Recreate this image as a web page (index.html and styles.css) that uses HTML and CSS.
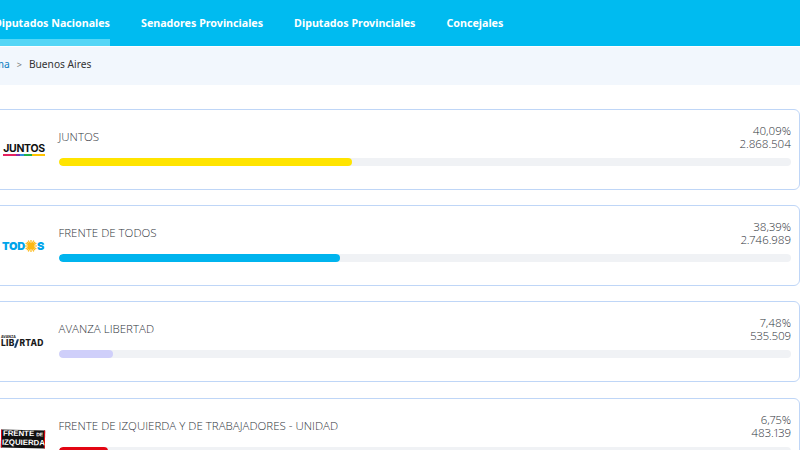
FILE: index.html
```html
<!DOCTYPE html>
<html lang="es">
<head>
<meta charset="utf-8">
<title>Resultados</title>
<link rel="stylesheet" href="styles.css">
</head>
<body>
<div class="page">
  <nav class="tabs">
    <a class="tab active">Diputados Nacionales</a>
    <a class="tab">Senadores Provinciales</a>
    <a class="tab">Diputados Provinciales</a>
    <a class="tab">Concejales</a>
  </nav>
  <div class="crumbs"><span class="link">Sistema</span><span class="sep">&gt;</span><span>Buenos Aires</span></div>
  <main class="list">
    <section class="card">
      <div class="logo"><div class="juntos">JUNTOS<div class="rainbow"></div></div></div>
      <div class="body">
        <div class="head"><div class="name">JUNTOS</div><div class="nums">40,09%<br>2.868.504</div></div>
        <div class="track"><div class="fill yellow" style="width:40.09%"></div></div>
      </div>
    </section>
    <section class="card">
      <div class="logo"><div class="todos">TOD<svg class="sun" viewBox="0 0 20 20"><g stroke="#fdb813" stroke-width="2"><path d="M10 0v20M0 10h20M3 3l14 14M17 3L3 17M5.500 1l9 18M14.500 1l-9 18M1 5.500l18 9M19 5.500l-18 9"/></g><circle cx="10" cy="10" r="5.500" fill="#fdb813"/></svg>S</div></div>
      <div class="body">
        <div class="head"><div class="name">FRENTE DE TODOS</div><div class="nums">38,39%<br>2.746.989</div></div>
        <div class="track"><div class="fill blue" style="width:38.39%"></div></div>
      </div>
    </section>
    <section class="card">
      <div class="logo"><div class="avanza"><div class="avanza-top">AVANZA</div><div class="avanza-main">LIB<svg class="slash" viewBox="0 0 6 10"><path d="M3.500 0H6L2.500 10H0z" fill="#123a6b"/></svg>RTAD</div></div></div>
      <div class="body">
        <div class="head"><div class="name">AVANZA LIBERTAD</div><div class="nums">7,48%<br>535.509</div></div>
        <div class="track"><div class="fill lilac" style="width:7.48%"></div></div>
      </div>
    </section>
    <section class="card">
      <div class="logo"><div class="fit"><div>FRENTE <span class="de">DE</span></div><div>IZQUIERDA</div></div></div>
      <div class="body">
        <div class="head"><div class="name">FRENTE DE IZQUIERDA Y DE TRABAJADORES - UNIDAD</div><div class="nums">6,75%<br>483.139</div></div>
        <div class="track"><div class="fill red" style="width:6.75%"></div></div>
      </div>
    </section>
  </main>
</div>
</body>
</html>
```
FILE: styles.css
```css
html, body { margin: 0; padding: 0; background: #fff; }
body { width: 800px; height: 450px; overflow: hidden; font-family: "Open Sans", "Liberation Sans", sans-serif; }
.page { margin-left: -20px; width: 820px; }
.tabs { display: flex; height: 46px; background: #00bbf0; gap: 31px; padding-left: 14px; }
.tab { display: flex; align-items: center; height: 46px; box-sizing: border-box; color: #fff; font-family: "Noto Sans", sans-serif; font-size: 10.700px; font-weight: 700; white-space: nowrap; }
.tab.active { margin-left: -14px; width: 130px; justify-content: flex-end; border-bottom: 7px solid #55d6f6; padding-top: 7px; }
.crumbs { display: flex; align-items: center; gap: 7px; height: 38px; box-sizing: border-box; padding-bottom: 4px; margin-top: 1px; background: #f2f7fd; font-family: "Noto Sans", sans-serif; font-size: 10.200px; color: #333; }
.crumbs .link { color: #0a7cc0; margin-left: -8px; }
.crumbs .sep { color: #777; font-size: 9px; }
.list { display: flex; flex-direction: column; gap: 15.200px; padding-top: 24px; }
.card { flex: none; display: flex; box-sizing: border-box; height: 81px; width: 820px; border: 1px solid #bfd6f7; border-radius: 6px; background: #fff; }
.logo { flex: none; width: 77.500px; display: flex; align-items: center; justify-content: flex-end; box-sizing: border-box; padding: 0 13.500px 0 0; height: 78px; }
.body { flex: 1; padding: 14px 8px 0 0; min-width: 0; }
.head { display: flex; justify-content: space-between; height: 28px; }
.name { font-size: 11.500px; font-weight: 300; color: #2f343b; line-height: 26px; }
.nums { font-size: 11.500px; font-weight: 300; color: #2f343b; line-height: 13px; text-align: right; font-variant-numeric: proportional-nums; }
.track { height: 8px; margin-top: 6px; border-radius: 4px; background: #f0f2f5; overflow: hidden; }
.fill { height: 8px; border-radius: 4px; }
.yellow { background: #ffe400; }
.blue { background: #00b4ee; }
.lilac { background: #cfcffa; }
.red { background: #e30613; }
.juntos { width: 42px; font-family: "Inter", sans-serif; font-size: 10.500px; font-weight: 700; line-height: 11px; color: #111; text-align: center; letter-spacing: -0.300px; }
.rainbow { height: 2px; background: linear-gradient(90deg, #e6215f 0 30%, #8a2ca8 30% 40%, #2d8fe0 40% 50%, #21b14b 50% 70%, #ffc400 70% 100%); }
.todos { display: flex; align-items: center; width: 43px; padding-top: 2px; font-family: "Inter", sans-serif; font-size: 11px; font-weight: 900; color: #00a4ea; letter-spacing: -0.200px; }
.sun { width: 12px; height: 12px; flex: none; }
.avanza { width: 44px; color: #1a1a1a; font-family: "Inter", sans-serif; font-weight: 700; }
.avanza-top { font-size: 3.500px; line-height: 4px; }
.avanza-main { display: flex; align-items: center; font-size: 8.500px; line-height: 8px; letter-spacing: 0.200px; font-weight: 800; }
.slash { width: 5px; height: 9px; flex: none; }
.fit { width: 44px; height: 18px; box-sizing: border-box; margin-top: 2px; background: #111; border-left: 1px solid #e30613; border-right: 1px solid #e30613; color: #fff; font-family: "Liberation Sans", sans-serif; font-size: 7.800px; font-weight: 700; line-height: 8.500px; text-align: center; transform: rotate(1deg); }
.fit .de { font-size: 5px; }
```
